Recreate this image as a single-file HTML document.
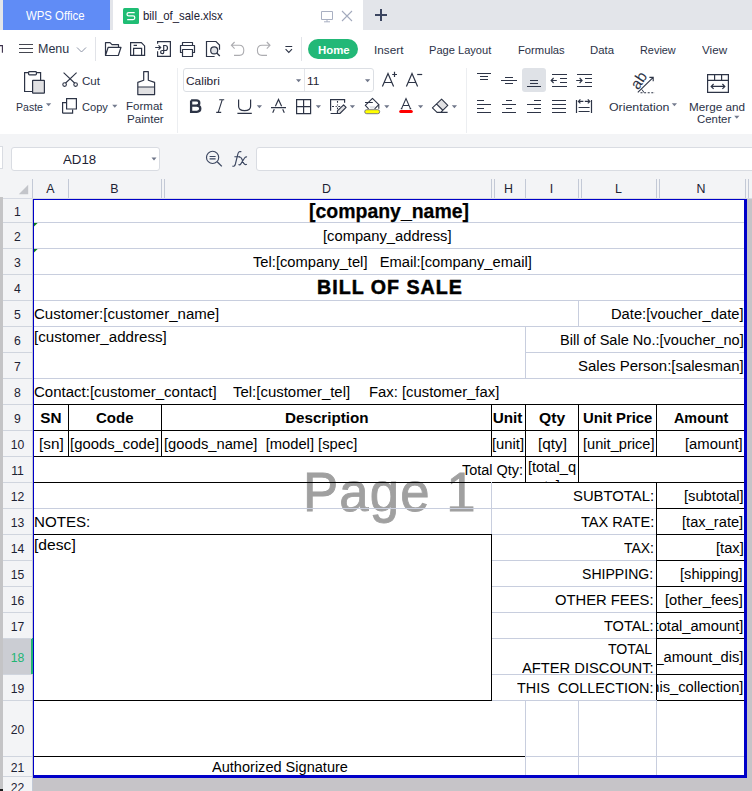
<!DOCTYPE html>
<html><head><meta charset="utf-8"><style>
html,body{margin:0;padding:0;}
body{width:752px;height:791px;overflow:hidden;position:relative;background:#fff;font-family:"Liberation Sans", sans-serif;}
svg{display:block}
</style></head><body>
<div style="position:absolute;left:0px;top:0px;width:752px;height:30px;background:#e3e5ea;"></div>
<div style="position:absolute;left:3px;top:0px;width:107px;height:30px;background:#608cf6;"></div>
<div style="position:absolute;left:25.90px;top:9.00px;font-size:12.4px;line-height:14.26px;font-weight:normal;color:#fff;white-space:pre;transform:scaleX(0.9190);transform-origin:0 0;">WPS Office</div>
<div style="position:absolute;left:113px;top:0px;width:250px;height:30px;background:#ffffff;"></div>
<div style="position:absolute;left:123px;top:8px;width:16px;height:16px;background:#1fbd74;border-radius:1.5px"></div>
<div style="position:absolute;left:142.88px;top:9.00px;font-size:12.4px;line-height:14.26px;font-weight:normal;color:#1d2233;white-space:pre;transform:scaleX(0.9188);transform-origin:0 0;">bill_of_sale.xlsx</div>
<div style="position:absolute;left:0px;top:30px;width:752px;height:104px;background:#ffffff;"></div>
<div style="position:absolute;left:183px;top:68px;width:191px;height:24px;background:#fff;border:1px solid #dcdfe4;border-radius:3px;box-sizing:border-box"></div>
<div style="position:absolute;left:304px;top:69px;width:1px;height:22px;background:#e3e5ea;"></div>
<svg style="position:absolute;left:0;top:0" width="752" height="135" viewBox="0 0 752 135"><path d="M134.7 12.7 H128.7 Q127 12.7 127 14.3 Q127 15.9 128.7 15.9 H133.1 Q134.8 15.9 134.8 17.7 Q134.8 19.5 133.1 19.5 H127.2" stroke="#ffffff" stroke-width="1.25" fill="none" /><path d="M321.5 11.5 H332.5 V19.5 H321.5 Z M327 19.5 V21.8 M324 21.8 H330" stroke="#a9b0c2" stroke-width="1.0" fill="none" /><path d="M342 11 L352 21 M352 11 L342 21" stroke="#a3aabd" stroke-width="1.1" fill="none" /><path d="M381 9 V21 M375 15 H387" stroke="#3b4560" stroke-width="2.0" fill="none" /><path d="M0 45.6 H2.4 V52.8" stroke="#3a2f4a" stroke-width="1.1" fill="none" /><path d="M19 44.5 H33 M19 48.5 H33 M19 52.5 H33" stroke="#444650" stroke-width="1.1" fill="none" /><path d="M77 47.5 L81.5 52 L86 47.5" stroke="#8d94a6" stroke-width="1.0" fill="none" /><path d="M105.5 55.5 V42.6 H110 L112 44.6 H118.5 V47.3 M105.5 55.5 L108.2 47.3 H121 L118.3 55.5 Z" stroke="#2d3446" stroke-width="1.2" fill="none" stroke-linejoin="round"/><path d="M130.6 42.6 H141.3 L144.6 45.9 V55.4 H130.6 Z M133.6 55.4 V48.3 H141.6 V55.4 M133.6 45.3 H137" stroke="#2d3446" stroke-width="1.2" fill="none" /><path d="M157.6 43.8 V41.6 H170.4 V56.3 H157.6 V51.2 M155.2 47.5 H160.6 M158.5 45.3 L160.7 47.5 L158.5 49.7" stroke="#2d3446" stroke-width="1.2" fill="none" /><path d="M163.7 52.4 V45.5 H165.2 Q167.5 45.5 167.5 48 Q167.5 50.5 165.2 50.5 H162.4 Q160.6 50.5 160.6 52.1 Q160.6 53.7 162.2 53.7 Q163.7 53.7 163.7 52.4" stroke="#2d3446" stroke-width="1.2" fill="none" /><path d="M182.5 45.5 V42.5 H192.5 V45.5 M182.5 52.5 H180.5 V45.5 H194.5 V52.5 H192.5 M182.5 49.5 H192.5 V56.5 H182.5 Z" stroke="#2d3446" stroke-width="1.2" fill="none" stroke-linejoin="round"/><path d="M214.6 56.5 H206.5 V41.5 H216 L219.5 45 V49.8" stroke="#2d3446" stroke-width="1.2" fill="none" /><circle cx="214.2" cy="50.4" r="3.5" stroke="#2d3446" stroke-width="1.2" fill="#e1e3e7"/><path d="M216.8 53 L219.8 56" stroke="#2d3446" stroke-width="1.3" fill="none" /><path d="M234.6 42 L231.4 45.3 L234.6 48.6 M231.4 45.3 H239.4 Q243.8 45.3 243.8 50.35 Q243.8 55.4 239.4 55.4 H234" stroke="#acacb0" stroke-width="1.1" fill="none" /><path d="M266.8 42 L270 45.3 L266.8 48.6 M270 45.3 H262 Q257.4 45.3 257.4 50.35 Q257.4 55.4 262 55.4 H267" stroke="#acacb0" stroke-width="1.1" fill="none" /><path d="M285.4 46.5 H292.2 M285.6 49.2 L288.8 52.4 L292 49.2" stroke="#2d3446" stroke-width="1.1" fill="none" /><rect x="95" y="37" width="1" height="24" fill="#e1e3e8"/><rect x="301" y="37" width="1" height="24" fill="#e1e3e8"/><path d="M32 91.5 H24.6 V72.6 H40.6 V80" stroke="#2d3446" stroke-width="1.2" fill="none" /><rect x="28.6" y="71.6" width="7.8" height="3.2" rx="0.8" fill="#fff" stroke="#2d3446" stroke-width="1.2"/><rect x="32.6" y="80.4" width="11.8" height="12.8" rx="0.4" fill="#e1e1e3" stroke="#2d3446" stroke-width="1.2"/><path d="M46 103.2 H51.2 L48.6 106.2 Z" fill="#747b8e" stroke="none"/><path d="M63.6 72.6 L75.6 84 M76.6 72.6 L64.6 84" stroke="#2d3446" stroke-width="1.1" fill="none" /><circle cx="64.6" cy="84.6" r="1.8" stroke="#2d3446" stroke-width="1.1" fill="#fff"/><circle cx="75.6" cy="84.6" r="1.8" stroke="#2d3446" stroke-width="1.1" fill="#fff"/><path d="M62.6 113.2 V102.6 H66.6 M62.6 113.2 H72.6 V109.4" stroke="#2d3446" stroke-width="1.2" fill="none" /><path d="M66.6 98.6 H76.4 V109 H66.6 Z" stroke="#2d3446" stroke-width="1.2" fill="none" /><path d="M112.2 104.8 H117.4 L114.8 107.8 Z" fill="#747b8e" stroke="none"/><rect x="138" y="87" width="16.6" height="7.6" fill="#e1e1e3"/><path d="M143.7 71.6 H148.3 V80.2 L154.6 82.4 V94.6 H137.8 V82.4 L143.7 80.2 Z M137.8 87 H154.6" stroke="#2d3446" stroke-width="1.2" fill="none" stroke-linejoin="round"/><rect x="177" y="68" width="1" height="65" fill="#eceef1"/><path d="M296 79.2 H301.2 L298.6 82.2 Z" fill="#6f7689" stroke="none"/><path d="M365 79.2 H370.2 L367.6 82.2 Z" fill="#6f7689" stroke="none"/><path d="M191.1 100.4 V111.8 H196.9 Q200.3 111.8 200.3 108.6 Q200.3 105.6 196.7 105.6 H191.1 M191.1 100.4 H196.3 Q199.3 100.4 199.3 103 Q199.3 105.6 196.3 105.6" stroke="#2d3446" stroke-width="2.3" fill="none" stroke-linejoin="miter"/><path d="M219.2 99.8 H224.2 M216.2 112.4 H221.2 M222.2 99.8 L218.2 112.4" stroke="#2d3446" stroke-width="1.1" fill="none" /><path d="M238.6 99.6 V106.2 Q238.6 110.6 244.6 110.6 Q250.6 110.6 250.6 106.2 V99.6 M237.4 113.4 H251.8" stroke="#2d3446" stroke-width="1.2" fill="none" /><path d="M256.8 105.2 H262.0 L259.40000000000003 108.2 Z" fill="#6f7689" stroke="none"/><path d="M275.4 106.2 L278.5 99.4 L281.6 106.2 M271 107.6 H286 M274.3 109.2 L272.7 112.8 M282.7 109.2 L284.3 112.8" stroke="#2d3446" stroke-width="1.15" fill="none" /><path d="M296.6 99.6 H310.6 V113.6 H296.6 Z M303.6 99.6 V113.6 M296.6 106.6 H310.6" stroke="#2d3446" stroke-width="1.2" fill="none" /><path d="M315.8 105.2 H321.0 L318.40000000000003 108.2 Z" fill="#6f7689" stroke="none"/><path d="M330.6 110.8 V99.6 H344.6 V102.8 M330.6 113.5 H338" stroke="#2d3446" stroke-width="1.2" fill="none" /><path d="M332 106.5 H334 M335.6 106.5 H336.8 M338.3 106.5 H340.2 M337.5 101 V102.8 M337.5 104.4 V105.6 M337.5 107.4 V109.2" stroke="#2d3446" stroke-width="1.1" fill="none" /><path d="M337.4 110.9 L343.6 104.8 L346.1 107.3 L339.9 113.5 H337.4 Z" fill="#e1e1e3" stroke="#2d3446" stroke-width="1.1" stroke-linejoin="round"/><path d="M349.8 105.2 H355.0 L352.40000000000003 108.2 Z" fill="#6f7689" stroke="none"/><path d="M369.2 106.2 H375.6 L373.8 108.6 H370.6 Z" fill="#e1e2e6"/><path d="M368.6 108.8 L365.3 105.3 L372.5 98.4 L378.8 104.6 L374.6 108.8" fill="none" stroke="#2d3446" stroke-width="1.1" stroke-linejoin="round"/><path d="M365 102.5 H372.8 M378.8 104.6 V108.8" stroke="#2d3446" stroke-width="1.1" fill="none" /><rect x="364.7" y="109.7" width="15" height="4" rx="2" fill="#ffff00" stroke="#6e6e80" stroke-width="0.9"/><path d="M384.2 105.2 H389.4 L386.8 108.2 Z" fill="#6f7689" stroke="none"/><path d="M401.6 108.6 L406 98.6 L410.4 108.6 M403.4 105.5 H408.6 M400.8 108.6 H402.4 M409.6 108.6 H411.2" stroke="#2d3446" stroke-width="1.1" fill="none" /><rect x="399.2" y="110" width="13.6" height="3" rx="1.5" fill="#ff0000"/><path d="M418 105.2 H423.2 L420.6 108.2 Z" fill="#6f7689" stroke="none"/><path d="M441.6 99.2 L447.8 105.4 L442.2 111 L436.4 104.8 Z" fill="#e1e1e3"/><path d="M441.6 99.2 L447.8 105.4 L441 112.2 H436.8 L432.4 107.8 Z M436.4 103.8 L442.6 110 M436.6 112.4 H447.6" stroke="#2d3446" stroke-width="1.1" fill="none" stroke-linejoin="round"/><path d="M451.8 105.2 H457.0 L454.40000000000003 108.2 Z" fill="#6f7689" stroke="none"/><path d="M382.4 86.6 L388 73.6 L393.6 86.6 M384.5 82.5 H391.6" stroke="#2d3446" stroke-width="1.2" fill="none" /><path d="M392.2 74.5 H397 M394.5 71.8 V77" stroke="#2d3446" stroke-width="1.2" fill="none" /><path d="M406.4 86.6 L412 73.6 L417.6 86.6 M408.5 82.5 H415.6" stroke="#2d3446" stroke-width="1.2" fill="none" /><path d="M417.2 74.5 H422.2" stroke="#2d3446" stroke-width="1.2" fill="none" /><rect x="466" y="68" width="1" height="65" fill="#eceef1"/><rect x="522" y="68" width="24" height="24" rx="3" fill="#dfe2e7"/><path d="M477 73.5 H491 M480 76.5 H488 M480 79.5 H488" stroke="#2d3446" stroke-width="1.2" fill="none" /><path d="M505 77.5 H513 M501 80.5 H517 M505 83.5 H513" stroke="#2d3446" stroke-width="1.2" fill="none" /><path d="M530 80.5 H538 M530 83.5 H538 M527 86.5 H541" stroke="#2d3446" stroke-width="1.2" fill="none" /><path d="M552 74.5 H567 M560 78.5 H567 M560 82.5 H567 M552 86.5 H567 M551.2 80.5 H556.8 M553.6 78 L551.2 80.5 L553.6 83" stroke="#2d3446" stroke-width="1.2" fill="none" /><path d="M577 74.5 H592 M585 78.5 H592 M585 82.5 H592 M577 86.5 H592 M576.2 80.5 H582 M579.6 78 L582 80.5 L579.6 83" stroke="#2d3446" stroke-width="1.2" fill="none" /><path d="M477 100.5 H484 M477 104.5 H491 M477 108.5 H484 M477 112.5 H491" stroke="#2d3446" stroke-width="1.2" fill="none" /><path d="M506 100.5 H512 M502 104.5 H516 M506 108.5 H512 M502 112.5 H516" stroke="#2d3446" stroke-width="1.2" fill="none" /><path d="M534 100.5 H541 M527 104.5 H541 M534 108.5 H541 M527 112.5 H541" stroke="#2d3446" stroke-width="1.2" fill="none" /><path d="M552 100.5 H566 M552 104.5 H566 M552 108.5 H566 M552 112.5 H566" stroke="#2d3446" stroke-width="1.2" fill="none" /><path d="M576.5 100 V113 M591.5 100 V113 M578.6 107.5 H589.6 M578.6 111.5 H589.6 M578.4 101.4 H583.4 M580.4 99.4 L578.4 101.4 L580.4 103.4 M584.8 101.4 H589.8 M587.8 99.4 L589.8 101.4 L587.8 103.4" stroke="#2d3446" stroke-width="1.2" fill="none" /><text transform="translate(638.2 90.4) rotate(-56)" font-family="Liberation Sans" font-size="15.4" fill="#2d3446">ab</text><path d="M637.8 92.4 L653 77.6 M649.4 77.4 H653.2 V81.2" stroke="#2d3446" stroke-width="1.1" fill="none" /><path d="M640.5 92.8 H655" stroke="#2d3446" stroke-width="1.1" fill="none" stroke-dasharray="2 1.6"/><path d="M641.6 89.6 Q643.4 90.4 643.6 92.4" stroke="#2d3446" stroke-width="1.0" fill="none" /><path d="M671.8 103.2 H677.0 L674.4 106.2 Z" fill="#747b8e" stroke="none"/><path d="M707.6 74.6 H728.4 V92.4 H707.6 Z M707.6 80.4 H728.4 M714.6 74.6 V80.4 M721.6 74.6 V80.4 M711.2 86.4 H724.8 M713.6 84 L711.2 86.4 L713.6 88.8 M722.4 84 L724.8 86.4 L722.4 88.8" stroke="#2d3446" stroke-width="1.2" fill="none" /><path d="M734.2 115.8 H739.4000000000001 L736.8000000000001 118.8 Z" fill="#747b8e" stroke="none"/></svg>
<div style="position:absolute;left:38.26px;top:43.00px;font-size:12px;line-height:13.80px;font-weight:normal;color:#2b3247;white-space:pre;transform:scaleX(1.0393);transform-origin:0 0;">Menu</div>
<div style="position:absolute;left:308px;top:39px;width:50px;height:20px;background:#22b877;border-radius:10px"></div>
<div style="position:absolute;left:317.52px;top:43.00px;font-size:11.6px;line-height:13.34px;font-weight:bold;color:#fff;white-space:pre;transform:scaleX(0.9839);transform-origin:0 0;">Home</div>
<div style="position:absolute;left:373.60px;top:44.00px;font-size:11.8px;line-height:13.57px;font-weight:normal;color:#2b3247;white-space:pre;transform:scaleX(0.9964);transform-origin:0 0;">Insert</div>
<div style="position:absolute;left:428.76px;top:44.00px;font-size:11.8px;line-height:13.57px;font-weight:normal;color:#2b3247;white-space:pre;transform:scaleX(0.9400);transform-origin:0 0;">Page Layout</div>
<div style="position:absolute;left:517.65px;top:44.00px;font-size:11.8px;line-height:13.57px;font-weight:normal;color:#2b3247;white-space:pre;transform:scaleX(0.9500);transform-origin:0 0;">Formulas</div>
<div style="position:absolute;left:590.44px;top:44.00px;font-size:11.8px;line-height:13.57px;font-weight:normal;color:#2b3247;white-space:pre;transform:scaleX(0.9625);transform-origin:0 0;">Data</div>
<div style="position:absolute;left:639.68px;top:44.00px;font-size:11.8px;line-height:13.57px;font-weight:normal;color:#2b3247;white-space:pre;transform:scaleX(0.9237);transform-origin:0 0;">Review</div>
<div style="position:absolute;left:702.00px;top:44.00px;font-size:11.8px;line-height:13.57px;font-weight:normal;color:#2b3247;white-space:pre;transform:scaleX(0.9880);transform-origin:0 0;">View</div>
<div style="position:absolute;left:15.68px;top:101.00px;font-size:11.4px;line-height:13.11px;font-weight:normal;color:#2b3247;white-space:pre;transform:scaleX(0.9250);transform-origin:0 0;">Paste</div>
<div style="position:absolute;left:81.58px;top:75.00px;font-size:11.4px;line-height:13.11px;font-weight:normal;color:#2b3247;white-space:pre;transform:scaleX(1.0176);transform-origin:0 0;">Cut</div>
<div style="position:absolute;left:81.63px;top:101.00px;font-size:11.4px;line-height:13.11px;font-weight:normal;color:#2b3247;white-space:pre;transform:scaleX(0.9731);transform-origin:0 0;">Copy</div>
<div style="position:absolute;left:126.39px;top:100.00px;font-size:11.4px;line-height:13.11px;font-weight:normal;color:#2b3247;white-space:pre;transform:scaleX(1.0114);transform-origin:0 0;">Format</div>
<div style="position:absolute;left:127.38px;top:113.00px;font-size:11.4px;line-height:13.11px;font-weight:normal;color:#2b3247;white-space:pre;transform:scaleX(1.0171);transform-origin:0 0;">Painter</div>
<div style="position:absolute;left:185.77px;top:74.00px;font-size:11.6px;line-height:13.34px;font-weight:normal;color:#1d2233;white-space:pre;transform:scaleX(1.0290);transform-origin:0 0;">Calibri</div>
<div style="position:absolute;left:306.67px;top:74.00px;font-size:11.6px;line-height:13.34px;font-weight:normal;color:#1d2233;white-space:pre;transform:scaleX(1.0300);transform-origin:0 0;">11</div>
<div style="position:absolute;left:608.63px;top:100.00px;font-size:11.6px;line-height:13.34px;font-weight:normal;color:#2b3247;white-space:pre;transform:scaleX(1.0655);transform-origin:0 0;">Orientation</div>
<div style="position:absolute;left:688.99px;top:100.00px;font-size:11.6px;line-height:13.34px;font-weight:normal;color:#2b3247;white-space:pre;transform:scaleX(1.0093);transform-origin:0 0;">Merge and</div>
<div style="position:absolute;left:697.02px;top:112.00px;font-size:11.6px;line-height:13.34px;font-weight:normal;color:#2b3247;white-space:pre;transform:scaleX(0.9824);transform-origin:0 0;">Center</div>
<div style="position:absolute;left:0px;top:134px;width:752px;height:44px;background:#f3f4f6;"></div>
<div style="position:absolute;left:0px;top:146px;width:3px;height:23px;background:#fff;border:1px solid #d9dce2;border-left:none;box-sizing:border-box"></div>
<div style="position:absolute;left:11px;top:147px;width:149px;height:24px;background:#fff;border:1px solid #d9dce2;border-radius:3px;box-sizing:border-box"></div>
<div style="position:absolute;left:63.00px;top:154.00px;font-size:12px;line-height:13.80px;font-weight:normal;color:#1d2233;white-space:pre;transform:scaleX(1.1034);transform-origin:0 0;">AD18</div>
<svg style="position:absolute;left:151px;top:157px;" width="6" height="4" viewBox="0 0 6 4" fill="none" stroke="#2d3446" stroke-width="1.3"><path d="M0.5 0.5 H5.5 L3 3.5 Z" fill="#6f7689" stroke="none"/></svg>
<svg style="position:absolute;left:0;top:140px" width="260" height="36" viewBox="0 140 260 36" fill="none" stroke="#3b4660" stroke-width="1.15"><circle cx="212.6" cy="157.4" r="6.1"/><path d="M209.6 156.5 H215.6 M209.6 158.9 H215.6" stroke-width="1.1"/><path d="M217.2 161.8 L221.8 166.4" stroke-width="1.3"/><path d="M241.4 151.8 Q238.8 150.8 237.9 153.8 L235.4 164 Q234.6 166.9 232.4 166.1 M234.4 156.7 H240"/><path d="M238.8 157.2 Q240.6 156.4 241.6 158.6 L243.8 163.4 Q244.9 165.2 246.9 164.3 M247 157 Q245.4 156.4 244.4 158.2 L241 163.6 Q240 165.3 238.5 164.6"/></svg>
<div style="position:absolute;left:256px;top:147px;width:500px;height:24px;background:#fff;border:1px solid #d9dce2;border-radius:3px;box-sizing:border-box"></div>
<div style="position:absolute;left:0px;top:178px;width:752px;height:21px;background:#f3f4f6;"></div>
<div style="position:absolute;left:3px;top:198px;width:749px;height:1px;background:#d6dae3;"></div>
<svg style="position:absolute;left:17px;top:184px;" width="14" height="12" viewBox="0 0 14 12" fill="none" stroke="#2d3446" stroke-width="1.3"><path d="M11.2 0.8 V10.2 H1.8 Z" fill="#c3c5ca" stroke="none"/></svg>
<div style="position:absolute;left:32px;top:179px;width:1px;height:19px;background:#c3c9d6;"></div>
<div style="position:absolute;left:68px;top:179px;width:1px;height:19px;background:#c3c9d6;"></div>
<div style="position:absolute;left:161px;top:179px;width:1px;height:19px;background:#c3c9d6;"></div>
<div style="position:absolute;left:164px;top:179px;width:1px;height:19px;background:#c3c9d6;"></div>
<div style="position:absolute;left:491px;top:179px;width:1px;height:19px;background:#c3c9d6;"></div>
<div style="position:absolute;left:494px;top:179px;width:1px;height:19px;background:#c3c9d6;"></div>
<div style="position:absolute;left:525px;top:179px;width:1px;height:19px;background:#c3c9d6;"></div>
<div style="position:absolute;left:578px;top:179px;width:1px;height:19px;background:#c3c9d6;"></div>
<div style="position:absolute;left:581px;top:179px;width:1px;height:19px;background:#c3c9d6;"></div>
<div style="position:absolute;left:656px;top:179px;width:1px;height:19px;background:#c3c9d6;"></div>
<div style="position:absolute;left:659px;top:179px;width:1px;height:19px;background:#c3c9d6;"></div>
<div style="position:absolute;left:745px;top:179px;width:1px;height:19px;background:#c3c9d6;"></div>
<div style="position:absolute;left:748px;top:179px;width:1px;height:19px;background:#c3c9d6;"></div>
<div style="position:absolute;left:-249.5px;width:600px;text-align:center;top:182.37px;font-size:12.4px;line-height:14.26px;font-weight:normal;color:#1d2233;white-space:pre;">A</div>
<div style="position:absolute;left:-185.5px;width:600px;text-align:center;top:182.37px;font-size:12.4px;line-height:14.26px;font-weight:normal;color:#1d2233;white-space:pre;">B</div>
<div style="position:absolute;left:26.5px;width:600px;text-align:center;top:182.37px;font-size:12.4px;line-height:14.26px;font-weight:normal;color:#1d2233;white-space:pre;">D</div>
<div style="position:absolute;left:208.5px;width:600px;text-align:center;top:182.37px;font-size:12.4px;line-height:14.26px;font-weight:normal;color:#1d2233;white-space:pre;">H</div>
<div style="position:absolute;left:251.5px;width:600px;text-align:center;top:182.37px;font-size:12.4px;line-height:14.26px;font-weight:normal;color:#1d2233;white-space:pre;">I</div>
<div style="position:absolute;left:318.5px;width:600px;text-align:center;top:182.37px;font-size:12.4px;line-height:14.26px;font-weight:normal;color:#1d2233;white-space:pre;">L</div>
<div style="position:absolute;left:401px;width:600px;text-align:center;top:182.37px;font-size:12.4px;line-height:14.26px;font-weight:normal;color:#1d2233;white-space:pre;">N</div>
<div style="position:absolute;left:0px;top:197px;width:3px;height:594px;background:#c4c4c6;"></div>
<div style="position:absolute;left:3px;top:199px;width:29px;height:592px;background:#f3f4f6;"></div>
<div style="position:absolute;left:32px;top:199px;width:1px;height:592px;background:#c3c9d6;"></div>
<div style="position:absolute;left:3px;top:638px;width:29px;height:36px;background:#cbcdd3;"></div>
<div style="position:absolute;left:31px;top:638px;width:2px;height:36px;background:#22b573;"></div>
<div style="position:absolute;left:3px;top:222px;width:29px;height:1px;background:#d0d5de;"></div>
<div style="position:absolute;left:3px;top:248px;width:29px;height:1px;background:#d0d5de;"></div>
<div style="position:absolute;left:3px;top:274px;width:29px;height:1px;background:#d0d5de;"></div>
<div style="position:absolute;left:3px;top:300px;width:29px;height:1px;background:#d0d5de;"></div>
<div style="position:absolute;left:3px;top:326px;width:29px;height:1px;background:#d0d5de;"></div>
<div style="position:absolute;left:3px;top:352px;width:29px;height:1px;background:#d0d5de;"></div>
<div style="position:absolute;left:3px;top:378px;width:29px;height:1px;background:#d0d5de;"></div>
<div style="position:absolute;left:3px;top:404px;width:29px;height:1px;background:#d0d5de;"></div>
<div style="position:absolute;left:3px;top:430px;width:29px;height:1px;background:#d0d5de;"></div>
<div style="position:absolute;left:3px;top:456px;width:29px;height:1px;background:#d0d5de;"></div>
<div style="position:absolute;left:3px;top:482px;width:29px;height:1px;background:#d0d5de;"></div>
<div style="position:absolute;left:3px;top:508px;width:29px;height:1px;background:#d0d5de;"></div>
<div style="position:absolute;left:3px;top:534px;width:29px;height:1px;background:#d0d5de;"></div>
<div style="position:absolute;left:3px;top:560px;width:29px;height:1px;background:#d0d5de;"></div>
<div style="position:absolute;left:3px;top:586px;width:29px;height:1px;background:#d0d5de;"></div>
<div style="position:absolute;left:3px;top:612px;width:29px;height:1px;background:#d0d5de;"></div>
<div style="position:absolute;left:3px;top:638px;width:29px;height:1px;background:#d0d5de;"></div>
<div style="position:absolute;left:3px;top:674px;width:29px;height:1px;background:#d0d5de;"></div>
<div style="position:absolute;left:3px;top:700px;width:29px;height:1px;background:#d0d5de;"></div>
<div style="position:absolute;left:3px;top:756px;width:29px;height:1px;background:#d0d5de;"></div>
<div style="position:absolute;left:3px;top:776px;width:29px;height:1px;background:#d0d5de;"></div>
<div style="position:absolute;left:-282.5px;width:600px;text-align:center;top:204.86px;font-size:12.2px;line-height:14.03px;font-weight:normal;color:#1d2233;white-space:pre;">1</div>
<div style="position:absolute;left:-282.5px;width:600px;text-align:center;top:230.06px;font-size:12.2px;line-height:14.03px;font-weight:normal;color:#1d2233;white-space:pre;">2</div>
<div style="position:absolute;left:-282.5px;width:600px;text-align:center;top:256.06px;font-size:12.2px;line-height:14.03px;font-weight:normal;color:#1d2233;white-space:pre;">3</div>
<div style="position:absolute;left:-282.5px;width:600px;text-align:center;top:282.06px;font-size:12.2px;line-height:14.03px;font-weight:normal;color:#1d2233;white-space:pre;">4</div>
<div style="position:absolute;left:-282.5px;width:600px;text-align:center;top:308.06px;font-size:12.2px;line-height:14.03px;font-weight:normal;color:#1d2233;white-space:pre;">5</div>
<div style="position:absolute;left:-282.5px;width:600px;text-align:center;top:334.06px;font-size:12.2px;line-height:14.03px;font-weight:normal;color:#1d2233;white-space:pre;">6</div>
<div style="position:absolute;left:-282.5px;width:600px;text-align:center;top:360.06px;font-size:12.2px;line-height:14.03px;font-weight:normal;color:#1d2233;white-space:pre;">7</div>
<div style="position:absolute;left:-282.5px;width:600px;text-align:center;top:386.06px;font-size:12.2px;line-height:14.03px;font-weight:normal;color:#1d2233;white-space:pre;">8</div>
<div style="position:absolute;left:-282.5px;width:600px;text-align:center;top:412.06px;font-size:12.2px;line-height:14.03px;font-weight:normal;color:#1d2233;white-space:pre;">9</div>
<div style="position:absolute;left:-282.5px;width:600px;text-align:center;top:438.06px;font-size:12.2px;line-height:14.03px;font-weight:normal;color:#1d2233;white-space:pre;">10</div>
<div style="position:absolute;left:-282.5px;width:600px;text-align:center;top:464.06px;font-size:12.2px;line-height:14.03px;font-weight:normal;color:#1d2233;white-space:pre;">11</div>
<div style="position:absolute;left:-282.5px;width:600px;text-align:center;top:490.06px;font-size:12.2px;line-height:14.03px;font-weight:normal;color:#1d2233;white-space:pre;">12</div>
<div style="position:absolute;left:-282.5px;width:600px;text-align:center;top:516.06px;font-size:12.2px;line-height:14.03px;font-weight:normal;color:#1d2233;white-space:pre;">13</div>
<div style="position:absolute;left:-282.5px;width:600px;text-align:center;top:542.06px;font-size:12.2px;line-height:14.03px;font-weight:normal;color:#1d2233;white-space:pre;">14</div>
<div style="position:absolute;left:-282.5px;width:600px;text-align:center;top:568.06px;font-size:12.2px;line-height:14.03px;font-weight:normal;color:#1d2233;white-space:pre;">15</div>
<div style="position:absolute;left:-282.5px;width:600px;text-align:center;top:594.06px;font-size:12.2px;line-height:14.03px;font-weight:normal;color:#1d2233;white-space:pre;">16</div>
<div style="position:absolute;left:-282.5px;width:600px;text-align:center;top:620.06px;font-size:12.2px;line-height:14.03px;font-weight:normal;color:#1d2233;white-space:pre;">17</div>
<div style="position:absolute;left:-282.5px;width:600px;text-align:center;top:651.06px;font-size:12.2px;line-height:14.03px;font-weight:normal;color:#22b573;white-space:pre;">18</div>
<div style="position:absolute;left:-282.5px;width:600px;text-align:center;top:682.06px;font-size:12.2px;line-height:14.03px;font-weight:normal;color:#1d2233;white-space:pre;">19</div>
<div style="position:absolute;left:-282.5px;width:600px;text-align:center;top:723.06px;font-size:12.2px;line-height:14.03px;font-weight:normal;color:#1d2233;white-space:pre;">20</div>
<div style="position:absolute;left:-282.5px;width:600px;text-align:center;top:761.06px;font-size:12.2px;line-height:14.03px;font-weight:normal;color:#1d2233;white-space:pre;">21</div>
<div style="position:absolute;left:-282.5px;width:600px;text-align:center;top:780.86px;font-size:12.2px;line-height:14.03px;font-weight:normal;color:#1d2233;white-space:pre;">22</div>
<div style="position:absolute;left:33px;top:199px;width:719px;height:592px;background:#c6c4c8;"></div>
<div style="position:absolute;left:0px;top:789px;width:3px;height:2px;background:#1a1a1a;"></div>
<div style="position:absolute;left:33px;top:199px;width:714px;height:579px;background:#ffffff;"></div>
<div style="position:absolute;left:302.89px;top:460.00px;font-size:56px;line-height:64.40px;font-weight:normal;color:#a0a0a0;white-space:pre;transform:scaleX(0.9411);transform-origin:0 0;letter-spacing:1.2px;-webkit-text-stroke:0.9px #a0a0a0">Page 1</div>
<div style="position:absolute;left:33px;top:222px;width:711px;height:1px;background:#c8cede;"></div>
<div style="position:absolute;left:33px;top:248px;width:711px;height:1px;background:#c8cede;"></div>
<div style="position:absolute;left:33px;top:274px;width:711px;height:1px;background:#c8cede;"></div>
<div style="position:absolute;left:33px;top:300px;width:711px;height:1px;background:#c8cede;"></div>
<div style="position:absolute;left:33px;top:326px;width:711px;height:1px;background:#c8cede;"></div>
<div style="position:absolute;left:33px;top:378px;width:711px;height:1px;background:#c8cede;"></div>
<div style="position:absolute;left:525px;top:352px;width:219px;height:1px;background:#c8cede;"></div>
<div style="position:absolute;left:33px;top:404px;width:712px;height:1px;background:#000;"></div>
<div style="position:absolute;left:33px;top:430px;width:712px;height:1px;background:#000;"></div>
<div style="position:absolute;left:33px;top:456px;width:712px;height:1px;background:#000;"></div>
<div style="position:absolute;left:33px;top:482px;width:712px;height:1px;background:#000;"></div>
<div style="position:absolute;left:33px;top:508px;width:623px;height:1px;background:#c8cede;"></div>
<div style="position:absolute;left:656px;top:508px;width:89px;height:1px;background:#000;"></div>
<div style="position:absolute;left:33px;top:534px;width:459px;height:1px;background:#000;"></div>
<div style="position:absolute;left:491px;top:534px;width:165px;height:1px;background:#c8cede;"></div>
<div style="position:absolute;left:656px;top:534px;width:89px;height:1px;background:#000;"></div>
<div style="position:absolute;left:491px;top:560px;width:165px;height:1px;background:#c8cede;"></div>
<div style="position:absolute;left:656px;top:560px;width:89px;height:1px;background:#000;"></div>
<div style="position:absolute;left:491px;top:586px;width:165px;height:1px;background:#c8cede;"></div>
<div style="position:absolute;left:656px;top:586px;width:89px;height:1px;background:#000;"></div>
<div style="position:absolute;left:491px;top:612px;width:165px;height:1px;background:#c8cede;"></div>
<div style="position:absolute;left:656px;top:612px;width:89px;height:1px;background:#000;"></div>
<div style="position:absolute;left:491px;top:638px;width:165px;height:1px;background:#c8cede;"></div>
<div style="position:absolute;left:656px;top:638px;width:89px;height:1px;background:#000;"></div>
<div style="position:absolute;left:491px;top:674px;width:165px;height:1px;background:#c8cede;"></div>
<div style="position:absolute;left:656px;top:674px;width:89px;height:1px;background:#000;"></div>
<div style="position:absolute;left:33px;top:700px;width:459px;height:1px;background:#000;"></div>
<div style="position:absolute;left:491px;top:700px;width:165px;height:1px;background:#c8cede;"></div>
<div style="position:absolute;left:656px;top:700px;width:89px;height:1px;background:#000;"></div>
<div style="position:absolute;left:33px;top:756px;width:492px;height:1px;background:#000;"></div>
<div style="position:absolute;left:525px;top:756px;width:219px;height:1px;background:#c8cede;"></div>
<div style="position:absolute;left:578px;top:300px;width:1px;height:26px;background:#c8cede;"></div>
<div style="position:absolute;left:525px;top:326px;width:1px;height:52px;background:#c8cede;"></div>
<div style="position:absolute;left:68px;top:404px;width:1px;height:53px;background:#000;"></div>
<div style="position:absolute;left:161px;top:404px;width:1px;height:53px;background:#000;"></div>
<div style="position:absolute;left:491px;top:404px;width:1px;height:53px;background:#000;"></div>
<div style="position:absolute;left:525px;top:404px;width:1px;height:53px;background:#000;"></div>
<div style="position:absolute;left:578px;top:404px;width:1px;height:53px;background:#000;"></div>
<div style="position:absolute;left:656px;top:404px;width:1px;height:53px;background:#000;"></div>
<div style="position:absolute;left:525px;top:456px;width:1px;height:27px;background:#000;"></div>
<div style="position:absolute;left:578px;top:456px;width:1px;height:27px;background:#000;"></div>
<div style="position:absolute;left:491px;top:482px;width:1px;height:52px;background:#c8cede;"></div>
<div style="position:absolute;left:491px;top:534px;width:1px;height:167px;background:#000;"></div>
<div style="position:absolute;left:656px;top:482px;width:1px;height:219px;background:#000;"></div>
<div style="position:absolute;left:525px;top:700px;width:1px;height:75px;background:#c8cede;"></div>
<div style="position:absolute;left:578px;top:700px;width:1px;height:75px;background:#c8cede;"></div>
<div style="position:absolute;left:656px;top:700px;width:1px;height:75px;background:#c8cede;"></div>
<div style="position:absolute;left:309.21px;top:200.00px;font-size:19.6px;line-height:22.54px;font-weight:bold;color:#000;white-space:pre;transform:scaleX(0.9931);transform-origin:0 0;-webkit-text-stroke:0.25px #000">[company_name]</div>
<div style="position:absolute;left:323.14px;top:227.00px;font-size:15.3px;line-height:17.59px;font-weight:normal;color:#000;white-space:pre;transform:scaleX(0.9629);transform-origin:0 0;">[company_address]</div>
<div style="position:absolute;left:253.40px;top:253.00px;font-size:15.3px;line-height:17.59px;font-weight:normal;color:#000;white-space:pre;transform:scaleX(0.9616);transform-origin:0 0;">Tel:[company_tel]   Email:[company_email]</div>
<div style="position:absolute;left:317.08px;top:277.00px;font-size:19.3px;line-height:22.20px;font-weight:bold;color:#000;white-space:pre;transform:scaleX(1.0170);transform-origin:0 0;letter-spacing:1px;-webkit-text-stroke:0.5px #000">BILL OF SALE</div>
<div style="position:absolute;left:34.42px;top:305.00px;font-size:15.3px;line-height:17.59px;font-weight:normal;color:#000;white-space:pre;transform:scaleX(0.9818);transform-origin:0 0;">Customer:[customer_name]</div>
<div style="position:absolute;left:611.04px;top:305.00px;font-size:15.3px;line-height:17.59px;font-weight:normal;color:#000;white-space:pre;transform:scaleX(0.9618);transform-origin:0 0;">Date:[voucher_date]</div>
<div style="position:absolute;left:34.41px;top:328.00px;font-size:15.3px;line-height:17.59px;font-weight:normal;color:#000;white-space:pre;transform:scaleX(0.9879);transform-origin:0 0;">[customer_address]</div>
<div style="position:absolute;left:560.05px;top:331.00px;font-size:15.3px;line-height:17.59px;font-weight:normal;color:#000;white-space:pre;transform:scaleX(0.9518);transform-origin:0 0;">Bill of Sale No.:[voucher_no]</div>
<div style="position:absolute;left:578.22px;top:357.00px;font-size:15.3px;line-height:17.59px;font-weight:normal;color:#000;white-space:pre;transform:scaleX(0.9796);transform-origin:0 0;">Sales Person:[salesman]</div>
<div style="position:absolute;left:34.32px;top:383.00px;font-size:15.3px;line-height:17.59px;font-weight:normal;color:#000;white-space:pre;transform:scaleX(0.9810);transform-origin:0 0;">Contact:[customer_contact]</div>
<div style="position:absolute;left:232.50px;top:383.00px;font-size:15.3px;line-height:17.59px;font-weight:normal;color:#000;white-space:pre;transform:scaleX(0.9773);transform-origin:0 0;">Tel:[customer_tel]</div>
<div style="position:absolute;left:368.73px;top:383.00px;font-size:15.3px;line-height:17.59px;font-weight:normal;color:#000;white-space:pre;transform:scaleX(0.9697);transform-origin:0 0;">Fax: [customer_fax]</div>
<div style="position:absolute;left:40.30px;top:409.00px;font-size:15.3px;line-height:17.59px;font-weight:bold;color:#000;white-space:pre;">SN</div>
<div style="position:absolute;left:95.62px;top:409.00px;font-size:15.3px;line-height:17.59px;font-weight:bold;color:#000;white-space:pre;transform:scaleX(0.9811);transform-origin:0 0;">Code</div>
<div style="position:absolute;left:285.31px;top:409.00px;font-size:15.3px;line-height:17.59px;font-weight:bold;color:#000;white-space:pre;transform:scaleX(0.9939);transform-origin:0 0;">Description</div>
<div style="position:absolute;left:492.70px;top:409.00px;font-size:15.3px;line-height:17.59px;font-weight:bold;color:#000;white-space:pre;">Unit</div>
<div style="position:absolute;left:538.68px;top:409.00px;font-size:15.3px;line-height:17.59px;font-weight:bold;color:#000;white-space:pre;transform:scaleX(1.0250);transform-origin:0 0;">Qty</div>
<div style="position:absolute;left:582.83px;top:409.00px;font-size:15.3px;line-height:17.59px;font-weight:bold;color:#000;white-space:pre;transform:scaleX(0.9714);transform-origin:0 0;">Unit Price</div>
<div style="position:absolute;left:674.36px;top:409.00px;font-size:15.3px;line-height:17.59px;font-weight:bold;color:#000;white-space:pre;transform:scaleX(0.9386);transform-origin:0 0;">Amount</div>
<div style="position:absolute;left:38.60px;top:435.00px;font-size:15.3px;line-height:17.59px;font-weight:normal;color:#000;white-space:pre;transform:scaleX(1.0043);transform-origin:0 0;">[sn]</div>
<div style="position:absolute;left:70.43px;top:435.00px;font-size:15.3px;line-height:17.59px;font-weight:normal;color:#000;white-space:pre;transform:scaleX(0.9711);transform-origin:0 0;">[goods_code]</div>
<div style="position:absolute;left:164.04px;top:435.00px;font-size:15.3px;line-height:17.59px;font-weight:normal;color:#000;white-space:pre;transform:scaleX(0.9638);transform-origin:0 0;">[goods_name]  [model] [spec]</div>
<div style="position:absolute;left:492.43px;top:435.00px;font-size:15.3px;line-height:17.59px;font-weight:normal;color:#000;white-space:pre;transform:scaleX(0.9677);transform-origin:0 0;">[unit]</div>
<div style="position:absolute;left:538.00px;top:435.00px;font-size:15.3px;line-height:17.59px;font-weight:normal;color:#000;white-space:pre;">[qty]</div>
<div style="position:absolute;left:582.84px;top:435.00px;font-size:15.3px;line-height:17.59px;font-weight:normal;color:#000;white-space:pre;transform:scaleX(0.9562);transform-origin:0 0;">[unit_price]</div>
<div style="position:absolute;left:685.03px;top:435.00px;font-size:15.3px;line-height:17.59px;font-weight:normal;color:#000;white-space:pre;transform:scaleX(0.9690);transform-origin:0 0;">[amount]</div>
<div style="position:absolute;left:462.30px;top:461.00px;font-size:15.3px;line-height:17.59px;font-weight:normal;color:#000;white-space:pre;transform:scaleX(0.9460);transform-origin:0 0;">Total Qty:</div>
<div style="position:absolute;left:526px;top:457px;width:52px;height:25px;overflow:hidden"><div style="position:absolute;left:0;width:52px;text-align:center;top:1px;font-size:14.67px;line-height:19.4px;white-space:pre">[total_q<br>ty]</div></div>
<div style="position:absolute;left:572.73px;top:487.00px;font-size:15.3px;line-height:17.59px;font-weight:normal;color:#000;white-space:pre;transform:scaleX(0.9704);transform-origin:0 0;">SUBTOTAL:</div>
<div style="position:absolute;left:580.80px;top:513.00px;font-size:15.3px;line-height:17.59px;font-weight:normal;color:#000;white-space:pre;transform:scaleX(0.9533);transform-origin:0 0;">TAX RATE:</div>
<div style="position:absolute;left:624.00px;top:539.00px;font-size:15.3px;line-height:17.59px;font-weight:normal;color:#000;white-space:pre;transform:scaleX(0.9129);transform-origin:0 0;">TAX:</div>
<div style="position:absolute;left:582.38px;top:565.00px;font-size:15.3px;line-height:17.59px;font-weight:normal;color:#000;white-space:pre;transform:scaleX(0.9200);transform-origin:0 0;">SHIPPING:</div>
<div style="position:absolute;left:554.73px;top:591.00px;font-size:15.3px;line-height:17.59px;font-weight:normal;color:#000;white-space:pre;transform:scaleX(0.9660);transform-origin:0 0;">OTHER FEES:</div>
<div style="position:absolute;left:603.80px;top:617.00px;font-size:15.3px;line-height:17.59px;font-weight:normal;color:#000;white-space:pre;transform:scaleX(0.9510);transform-origin:0 0;">TOTAL:</div>
<div style="position:absolute;left:517.10px;top:679.00px;font-size:15.3px;line-height:17.59px;font-weight:normal;color:#000;white-space:pre;transform:scaleX(0.9389);transform-origin:0 0;">THIS  COLLECTION:</div>
<div style="position:absolute;left:608.00px;top:640.00px;font-size:15.3px;line-height:17.59px;font-weight:normal;color:#000;white-space:pre;transform:scaleX(0.9229);transform-origin:0 0;">TOTAL</div>
<div style="position:absolute;left:522.40px;top:659.00px;font-size:15.3px;line-height:17.59px;font-weight:normal;color:#000;white-space:pre;transform:scaleX(0.9622);transform-origin:0 0;">AFTER DISCOUNT:</div>
<div style="position:absolute;left:683.84px;top:487.00px;font-size:15.3px;line-height:17.59px;font-weight:normal;color:#000;white-space:pre;transform:scaleX(0.9617);transform-origin:0 0;">[subtotal]</div>
<div style="position:absolute;left:682.04px;top:513.00px;font-size:15.3px;line-height:17.59px;font-weight:normal;color:#000;white-space:pre;transform:scaleX(0.9597);transform-origin:0 0;">[tax_rate]</div>
<div style="position:absolute;left:715.64px;top:539.00px;font-size:15.3px;line-height:17.59px;font-weight:normal;color:#000;white-space:pre;transform:scaleX(0.9593);transform-origin:0 0;">[tax]</div>
<div style="position:absolute;left:680.34px;top:565.00px;font-size:15.3px;line-height:17.59px;font-weight:normal;color:#000;white-space:pre;transform:scaleX(0.9563);transform-origin:0 0;">[shipping]</div>
<div style="position:absolute;left:665.44px;top:591.00px;font-size:15.3px;line-height:17.59px;font-weight:normal;color:#000;white-space:pre;transform:scaleX(0.9633);transform-origin:0 0;">[other_fees]</div>
<div style="position:absolute;left:657px;top:613px;width:87px;height:25px;overflow:hidden"><div style="position:absolute;right:0.6px;top:5px;font-size:14.67px;line-height:16.87px;white-space:pre;transform:scaleY(1.04);transform-origin:0 100%">[total_amount]</div></div>
<div style="position:absolute;left:657px;top:639px;width:87px;height:35px;overflow:hidden"><div style="position:absolute;right:0.6px;top:10px;font-size:14.67px;line-height:16.87px;white-space:pre;transform:scaleY(1.04);transform-origin:0 100%">[total_amount_dis]</div></div>
<div style="position:absolute;left:657px;top:675px;width:87px;height:25px;overflow:hidden"><div style="position:absolute;right:0.6px;top:4px;font-size:14.67px;line-height:16.87px;white-space:pre;transform:scaleY(1.04);transform-origin:0 100%">[this_collection]</div></div>
<div style="position:absolute;left:34.41px;top:513.00px;font-size:15.3px;line-height:17.59px;font-weight:normal;color:#000;white-space:pre;transform:scaleX(0.9873);transform-origin:0 0;">NOTES:</div>
<div style="position:absolute;left:34.38px;top:536.00px;font-size:15.3px;line-height:17.59px;font-weight:normal;color:#000;white-space:pre;transform:scaleX(1.0231);transform-origin:0 0;">[desc]</div>
<div style="position:absolute;left:211.70px;top:758.00px;font-size:15.3px;line-height:17.59px;font-weight:normal;color:#000;white-space:pre;transform:scaleX(0.9514);transform-origin:0 0;">Authorized Signature</div>
<div style="position:absolute;left:33px;top:199px;width:714px;height:1px;background:#0000c8;"></div>
<div style="position:absolute;left:33px;top:199px;width:1px;height:579px;background:#0000c8;"></div>
<div style="position:absolute;left:744px;top:199px;width:3px;height:579px;background:#0000c8;"></div>
<div style="position:absolute;left:33px;top:775px;width:714px;height:3px;background:#0000c8;"></div>
<svg style="position:absolute;left:34px;top:223px;" width="5" height="5" viewBox="0 0 5 5" fill="none" stroke="#2d3446" stroke-width="1.3"><path d="M0 0 H3.6 L0 3.6 Z" fill="#0f7d1f" stroke="none"/></svg>
<svg style="position:absolute;left:34px;top:249px;" width="5" height="5" viewBox="0 0 5 5" fill="none" stroke="#2d3446" stroke-width="1.3"><path d="M0 0 H3.6 L0 3.6 Z" fill="#0f7d1f" stroke="none"/></svg>
</body></html>
